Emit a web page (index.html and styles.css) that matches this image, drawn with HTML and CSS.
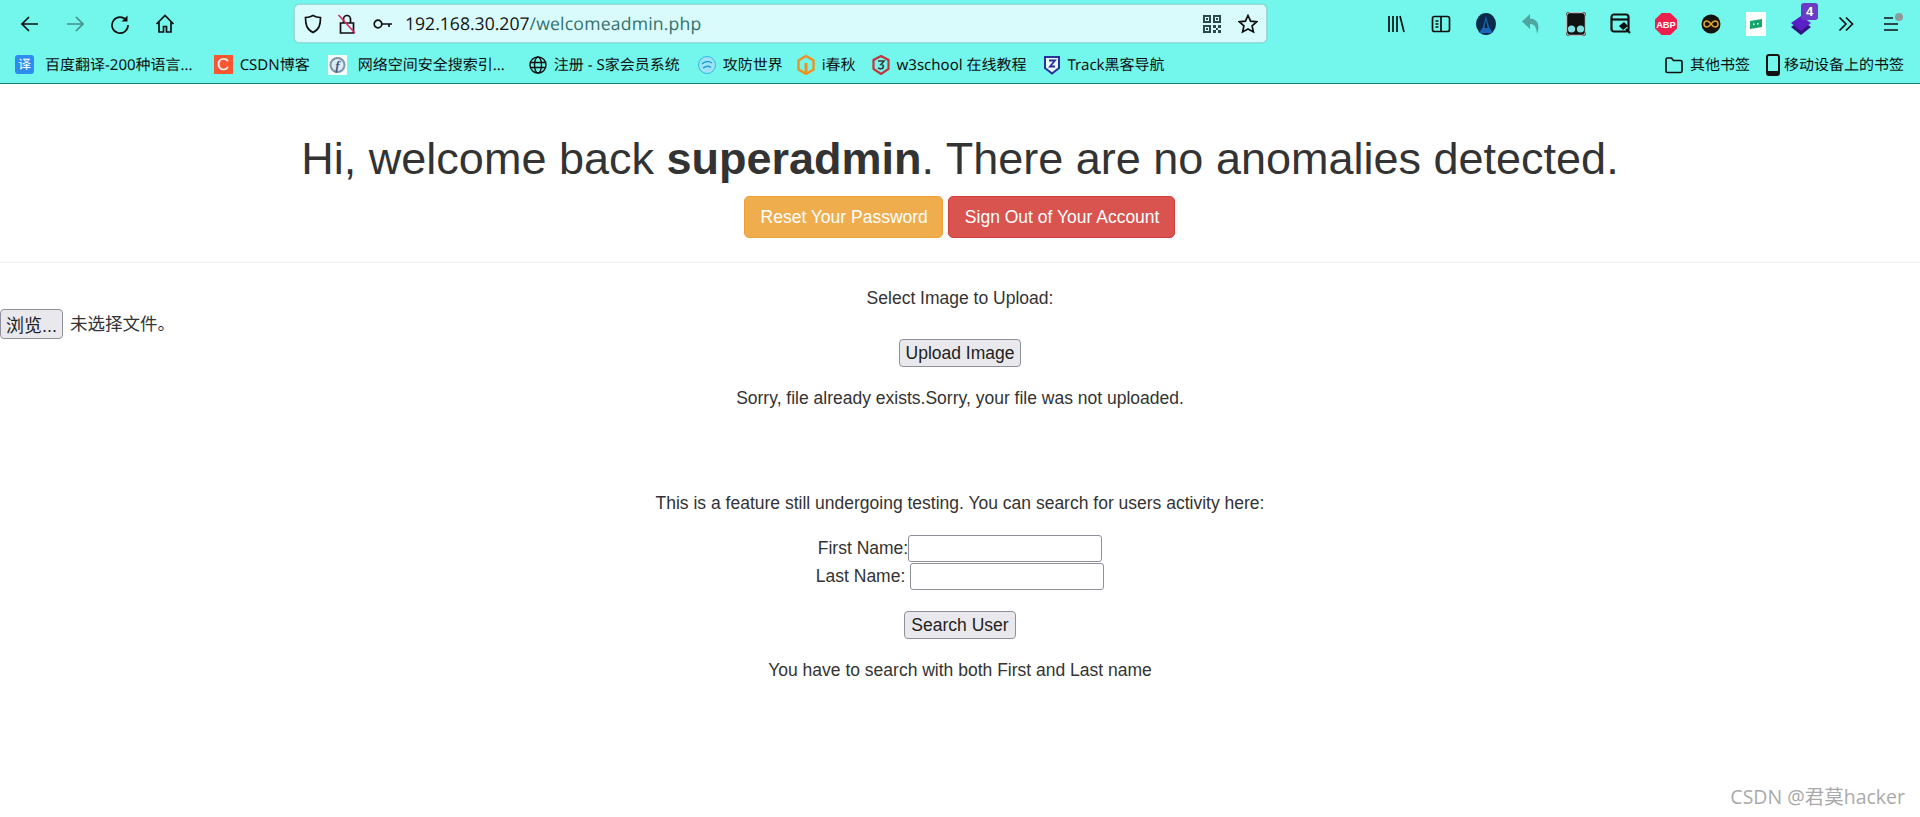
FILE: index.html
```html
<!DOCTYPE html>
<html lang="zh-CN">
<head>
    <meta charset="UTF-8">
    <title>welcomeadmin</title>
    <link rel="stylesheet" href="styles.css">
</head>
<body>
    <header class="browser">
        <div class="toolbar">
            <div class="tool-group">
                <span class="tool"><svg width="20" height="20" viewBox="0 0 20 20" class="line"><path d="M18 10H2M9 3l-7 7 7 7"/></svg></span>
                <span class="tool dim"><svg width="20" height="20" viewBox="0 0 20 20" class="line"><path d="M2 10h16M11 3l7 7-7 7"/></svg></span>
                <span class="tool"><svg width="20" height="20" viewBox="0 0 20 20" class="line"><path d="M16.5 6.5A8 8 0 1 0 18 11"/><path d="M17.5 1.5v6h-6" class="solid"/></svg></span>
                <span class="tool"><svg width="20" height="20" viewBox="0 0 20 20" class="line"><path d="M1.5 10L10 1.5l8.5 8.500M4 8v10h4.500v-5.500h3V18H16V8"/></svg></span>
            </div>
            <div class="urlbar">
                <svg width="20" height="20" viewBox="0 0 20 20" class="line url-shield"><path d="M10 1.500c2.500 1.500 5 2 7.500 2 0 7-1 11.500-7.500 15-6.500-3.500-7.500-8-7.500-15 2.500 0 5-.5 7.500-2z"/></svg>
                <svg width="20" height="22" viewBox="0 0 20 22" class="line url-lock"><path d="M6.500 9.500V6a3.500 3.500 0 0 1 7 0v3.500M3.500 10h13v10h-13z"/><path d="M1.500 2L18 20" class="slash"/></svg>
                <svg width="20" height="12" viewBox="0 0 20 12" class="line url-key"><circle cx="5" cy="6" r="3.800"/><path d="M9 6h10M16 6v3"/></svg>
                <span class="url">192.168.30.207<span class="url-path">/welcomeadmin.php</span></span>
                <svg width="18" height="18" viewBox="0 0 18 18" class="url-qr"><path d="M0 0h8v8H0zM10 0h8v8h-8zM0 10h8v8H0z" fill="#2a4a4a"/><path d="M2 2h4v4H2zM12 2h4v4h-4zM2 12h4v4H2z" fill="#d9fbfb"/><path d="M3 3h2v2H3zM13 3h2v2h-2zM3 13h2v2H3zM10 10h3v3h-3zM15 10h3v3h-3zM10 15h3v3h-3zM15 15h3v3h-3zM13 13h2v2h-2z" fill="#2a4a4a"/></svg>
                <svg width="20" height="20" viewBox="0 0 20 20" class="line url-star"><path d="M10 1.500l2.600 5.600 6 .7-4.500 4.100 1.300 6L10 14.900l-5.400 3 1.300-6-4.500-4.100 6-.7z"/></svg>
            </div>
            <div class="tool-group">
                <span class="tool"><svg width="20" height="20" viewBox="0 0 20 20" class="line"><path d="M3 2v16M7 2v16M11 2v16M14 2l4 16"/></svg></span>
                <span class="tool"><svg width="20" height="20" viewBox="0 0 20 20" class="line"><rect x="1.500" y="2.500" width="17" height="15" rx="2"/><path d="M10 2.500v15M4.500 7h3M4.500 10h3M4.500 13h3"/></svg></span>
                <span class="tool"><svg width="20" height="22" viewBox="0 0 20 22"><ellipse cx="10" cy="11" rx="10" ry="11" fill="#0c2a4c"/><path d="M10 3l3 11 4 6H3l4-6z" fill="#1a66b8"/><path d="M10 7l1.500 8h-3z" fill="#0b1d33"/></svg></span>
                <span class="tool"><svg width="20" height="22" viewBox="0 0 20 22"><path d="M9 1L1 8.500l8 7.500v-5c4.500 0 6.500 3 7 10 3.500-9 .5-15-7-15.500z" fill="#4fa69f"/></svg></span>
                <span class="tool"><svg width="20" height="24" viewBox="0 0 20 24"><rect width="20" height="24" rx="3" fill="#111"/><rect x="0.700" y="0.700" width="18.600" height="22.600" rx="3" fill="none" stroke="#e8e8e8" stroke-width="1"/><circle cx="5.500" cy="17" r="3.600" fill="#7ee0e0"/><circle cx="14.500" cy="17" r="3.600" fill="#7ee0e0"/></svg></span>
                <span class="tool"><svg width="22" height="24" viewBox="0 0 22 24" class="line heavy"><rect x="1.500" y="2.500" width="17" height="17" rx="2.500"/><path d="M1.500 7.500h17"/><path d="M9 14l5-4 4 4-5 4z" class="solid"/><path d="M16 17l4 4" /></svg></span>
                <span class="tool"><svg width="22" height="22" viewBox="0 0 20 20"><path d="M6 0h8l6 6v8l-6 6H6l-6-6V6z" fill="#ee1f4c"/><text x="10" y="13.500" class="abp">ABP</text></svg></span>
                <span class="tool"><svg width="20" height="20" viewBox="0 0 20 20"><circle cx="10" cy="10" r="9.500" fill="#16120c"/><path d="M10 10c-1.500-2-2.500-3-4-3a3 3 0 0 0 0 6c1.500 0 2.500-1 4-3s2.500-3 4-3a3 3 0 0 1 0 6c-1.500 0-2.500-1-4-3z" fill="none" stroke="#e0a52a" stroke-width="1.500"/></svg></span>
                <span class="tool"><svg width="20" height="24" viewBox="0 0 20 24"><rect width="20" height="24" fill="#fff"/><path d="M4 9l12-2v8l-12 2z" fill="#12a66a"/><path d="M7 11.500h1.500v1.500H7zM11 11h1.500v1.500H11z" fill="#fff"/></svg></span>
                <span class="tool ext-badge"><svg width="22" height="24" viewBox="0 0 22 24"><path d="M11 8l10 7-10 8-10-8z" fill="#32137f"/><path d="M11 4l10 7-10 8-10-8z" fill="#5a20c8"/></svg><span class="badge">4</span></span>
                <span class="tool"><svg width="16" height="16" viewBox="0 0 16 16" class="line"><path d="M1.500 1.500L8 8l-6.500 6.500M8 1.500L14.500 8 8 14.500"/></svg></span>
                <span class="tool ext-menu"><svg width="16" height="14" viewBox="0 0 16 14" class="line"><path d="M1 1h9M1 7h14M1 13h14"/></svg><span class="menu-dot"></span></span>
            </div>
        </div>
        <nav class="bookmarks">
            <a class="mark wide"><span class="fav fav-fanyi">译</span>百度翻译-200种语言...</a>
            <a class="mark mark-csdn"><span class="fav fav-csdn">C</span>CSDN博客</a>
            <a class="mark wide mark-fofa"><svg width="19" height="20" viewBox="0 0 19 20"><rect width="19" height="20" fill="#f4fbfb"/><circle cx="9.500" cy="10" r="7" fill="#dcecf2" stroke="#7f96a8" stroke-width="2"/><text x="9.500" y="14.500" class="fofa">f</text></svg>网络空间安全搜索引...</a>
            <a class="mark mark-globe"><svg width="18" height="18" viewBox="0 0 18 18" class="line globe"><circle cx="9" cy="9" r="8"/><ellipse cx="9" cy="9" rx="3.500" ry="8"/><path d="M1 6.500h16M1 11.500h16"/></svg>注册 - S家会员系统</a>
            <a class="mark mark-xctf"><svg width="18" height="18" viewBox="0 0 18 18"><circle cx="9" cy="9" r="8.500" fill="#9fe3f5" stroke="#35b5e5"/><path d="M4 8c3-3 7-3 10-1M5 12c3-2 6-2 8-.5" fill="none" stroke="#1c9fd6" stroke-width="1.500"/></svg>攻防世界</a>
            <a class="mark"><svg width="18" height="20" viewBox="0 0 18 20"><path d="M9 1l7.500 4.500v9L9 19l-7.500-4.500v-9z" fill="none" stroke="#f0901e" stroke-width="2.400"/><path d="M9 7v12" stroke="#f0901e" stroke-width="3"/><path d="M5 7h8" stroke="#73f7ec" stroke-width="2"/></svg>i春秋</a>
            <a class="mark"><svg width="18" height="20" viewBox="0 0 18 20"><path d="M9 1l7.500 4v9L9 19l-7.500-5V5z" fill="none" stroke="#c7333a" stroke-width="2.200"/><path d="M6 6h6l-3 3.500c3 0 3.500 4-.5 4.500L6 13" fill="none" stroke="#3a3a3a" stroke-width="1.600"/></svg>w3school 在线教程</a>
            <a class="mark"><svg width="18" height="20" viewBox="0 0 18 20"><path d="M2 2h14v11l-7 5.500L2 13z" fill="#e7f7ff" stroke="#26339a" stroke-width="2"/><path d="M6 5.500h6L7 11.500h5" fill="none" stroke="#26339a" stroke-width="1.800"/></svg>Track黑客导航</a>
            <a class="mark mark-end"><svg width="18" height="18" viewBox="0 0 18 18" class="line"><path d="M1 15V3.500A1.500 1.500 0 0 1 2.500 2h4l2 2.500h7A1.500 1.500 0 0 1 17 6v9a1.500 1.500 0 0 1-1.500 1.500h-13A1.500 1.500 0 0 1 1 15z"/></svg>其他书签</a>
            <a class="mark mark-mobile"><svg width="14" height="22" viewBox="0 0 14 22"><rect x="1" y="1" width="12" height="20" rx="2" fill="none" stroke="#111" stroke-width="2"/><rect x="1" y="17" width="12" height="4" fill="#111"/></svg>移动设备上的书签</a>
        </nav>
    </header>

    <main>
        <h1>Hi, welcome back <b>superadmin</b>. There are no anomalies detected.</h1>
        <div class="actions">
            <a class="btn btn-warning">Reset Your Password</a>
            <a class="btn btn-danger">Sign Out of Your Account</a>
        </div>
        <hr>
        <form class="upload">
            <label class="upload-label">Select Image to Upload:</label>
            <div class="file-row">
                <button type="button" class="native file-btn">浏览...</button>
                <span class="file-name">未选择文件。</span>
            </div>
            <button type="button" class="native">Upload Image</button>
        </form>
        <p class="upload-msg">Sorry, file already exists.Sorry, your file was not uploaded.</p>
        <p class="search-intro">This is a feature still undergoing testing. You can search for users activity here:</p>
        <form class="search">
            <div class="search-row">First Name:<input type="text"></div>
            <div class="search-row">Last Name: <input type="text"></div>
            <button type="button" class="native search-btn">Search User</button>
        </form>
        <p class="search-msg">You have to search with both First and Last name</p>
    </main>

    <div class="watermark">CSDN @君莫hacker</div>
</body>
</html>
```

FILE: styles.css
```css
html, body {
    margin: 0;
    padding: 0;
    background: #fff;
}

body {
    font-family: "Liberation Sans", "Noto Sans CJK SC", sans-serif;
    font-size: 17.5px;
    color: #333;
    height: 817px;
    overflow: hidden;
}

/* browser chrome */
.browser {
    background: #73f7ec;
    height: 83px;
    border-bottom: 1px solid #14807a;
    color: #111;
}

.toolbar {
    display: flex;
    align-items: flex-start;
    justify-content: space-between;
    height: 47px;
    padding: 0 7px 0 7px;
}

.tool-group {
    display: flex;
    align-items: center;
    height: 47px;
}

.tool {
    position: relative;
    display: flex;
    align-items: center;
    justify-content: center;
    width: 45px;
    height: 47px;
}

.dim {
    opacity: 0.45;
}

.line {
    fill: none;
    stroke: #111;
    stroke-width: 1.7;
}

.heavy {
    stroke-width: 2.2;
}

.line .solid {
    fill: #111;
    stroke: none;
}

.line .slash {
    stroke: #e0245e;
    stroke-width: 1.6;
}

.abp {
    font-family: "Liberation Sans", sans-serif;
    font-size: 8.500px;
    font-weight: bold;
    fill: #fff;
    text-anchor: middle;
}

.fofa {
    font-family: "Liberation Serif", serif;
    font-size: 13px;
    font-weight: bold;
    font-style: italic;
    fill: #3a5a88;
    text-anchor: middle;
}

.badge {
    position: absolute;
    top: 3px;
    right: 5px;
    width: 17px;
    height: 17px;
    border-radius: 3px;
    background: #6a3ac8;
    color: #fff;
    font-size: 13px;
    font-weight: bold;
    line-height: 17px;
    text-align: center;
}

.menu-dot {
    position: absolute;
    top: 13px;
    right: 10px;
    width: 8px;
    height: 8px;
    border-radius: 50%;
    background: #8b9a9a;
}

.urlbar {
    display: flex;
    align-items: center;
    width: 971px;
    height: 37px;
    margin-top: 4px;
    margin-left: 1px;
    background: #d9fbfb;
    border: 1px solid #a5d6d6;
    border-radius: 5px;
    box-shadow: 0 0 2px rgba(0, 0, 0, 0.15);
}

.url-shield {
    margin-left: 8px;
}

.url-lock {
    margin-left: 14px;
}

.url-key {
    margin-left: 16px;
}

.url {
    margin-left: 12px;
    font-family: "Open Sans", "Noto Sans", sans-serif;
    font-size: 17.600px;
    text-rendering: geometricPrecision;
    color: #111;
}

.url-path {
    letter-spacing: 0.2px;
    color: #33706c;
}

.url-qr {
    margin-left: auto;
}

.url-star {
    margin: 0 8px 0 17px;
}

.bookmarks {
    display: flex;
    align-items: center;
    height: 35px;
    padding-left: 15px;
    gap: 16px;
    font-family: "Noto Sans", "Noto Sans CJK SC", sans-serif;
    font-size: 15px;
    text-rendering: geometricPrecision;
    white-space: nowrap;
}

.mark {
    display: flex;
    align-items: center;
    gap: 7px;
}

.mark.wide {
    gap: 11px;
    margin-right: 5px;
}

.mark.mark-fofa {
    margin-right: 8px;
}

.mark-csdn,
.mark-globe {
    margin-right: 2px;
}

.mark-xctf {
    margin-right: -2px;
}

.mark-end {
    margin-left: auto;
}

.mark-mobile {
    gap: 4px;
    margin-right: 16px;
}

.fav {
    display: block;
    width: 19px;
    height: 19px;
    text-align: center;
    line-height: 19px;
    font-size: 13px;
    color: #fff;
}

.fav-fanyi {
    background: #2e8bf0;
    border-radius: 3px;
}

.fav-csdn {
    background: #fc5531;
    font-size: 17px;
    font-family: "Liberation Sans", sans-serif;
}

.globe {
    stroke-width: 1.4;
}

/* page */
main {
    text-align: center;
}

h1 {
    margin: 50px 0 12.500px;
    font-size: 45px;
    font-weight: 400;
    line-height: 49.500px;
    color: #333;
}

.actions {
    display: flex;
    justify-content: center;
    gap: 5px;
}

.btn {
    display: block;
    padding: 7.500px 15px;
    border: 1px solid transparent;
    border-radius: 5px;
    color: #fff;
    line-height: 25px;
}

.btn-warning {
    background: #f0ad4e;
    border-color: #eea236;
    margin-left: -1px;
    padding-left: 16px;
    padding-right: 14px;
}

.btn-danger {
    background: #d9534f;
    border-color: #d43f3a;
    padding-left: 16px;
}

hr {
    height: 1px;
    margin: 24px 0;
    border: 0;
    background: #eee;
}

.native {
    height: 28px;
    padding: 0 6px;
    background: #e9e9ed;
    border: 1px solid #8f8f9d;
    border-radius: 4px;
    font-family: "Liberation Sans", "Noto Sans CJK SC", sans-serif;
    font-size: 17.500px;
    color: #222;
}

.upload-label {
    display: block;
    line-height: 22px;
}

.file-row {
    display: flex;
    align-items: center;
    gap: 7px;
    height: 30px;
    text-align: left;
    line-height: 28px;
}

.file-btn {
    width: 63px;
    height: 30px;
    padding: 0;
    font-size: 18px;
}

.upload-msg {
    margin: 19px 0 0;
    line-height: 25px;
}

.search-intro {
    margin: 80px 0 0;
    line-height: 25px;
}

.search {
    margin-top: 19px;
}

.search-row {
    display: flex;
    justify-content: center;
    align-items: center;
    height: 27.500px;
    white-space: pre;
}

.search-row input {
    width: 194px;
    height: 27px;
    padding: 0;
    box-sizing: border-box;
    background: #fff;
    border: 1px solid #8f8f9d;
    border-radius: 3px;
}

.search-btn {
    margin-top: 21px;
}

.search-msg {
    margin: 19px 0 0;
    line-height: 25px;
}

.watermark {
    position: absolute;
    right: 15px;
    bottom: 7px;
    font-family: "Open Sans", "Noto Sans CJK SC", sans-serif;
    font-size: 19.500px;
    color: #aaa;
}
```
